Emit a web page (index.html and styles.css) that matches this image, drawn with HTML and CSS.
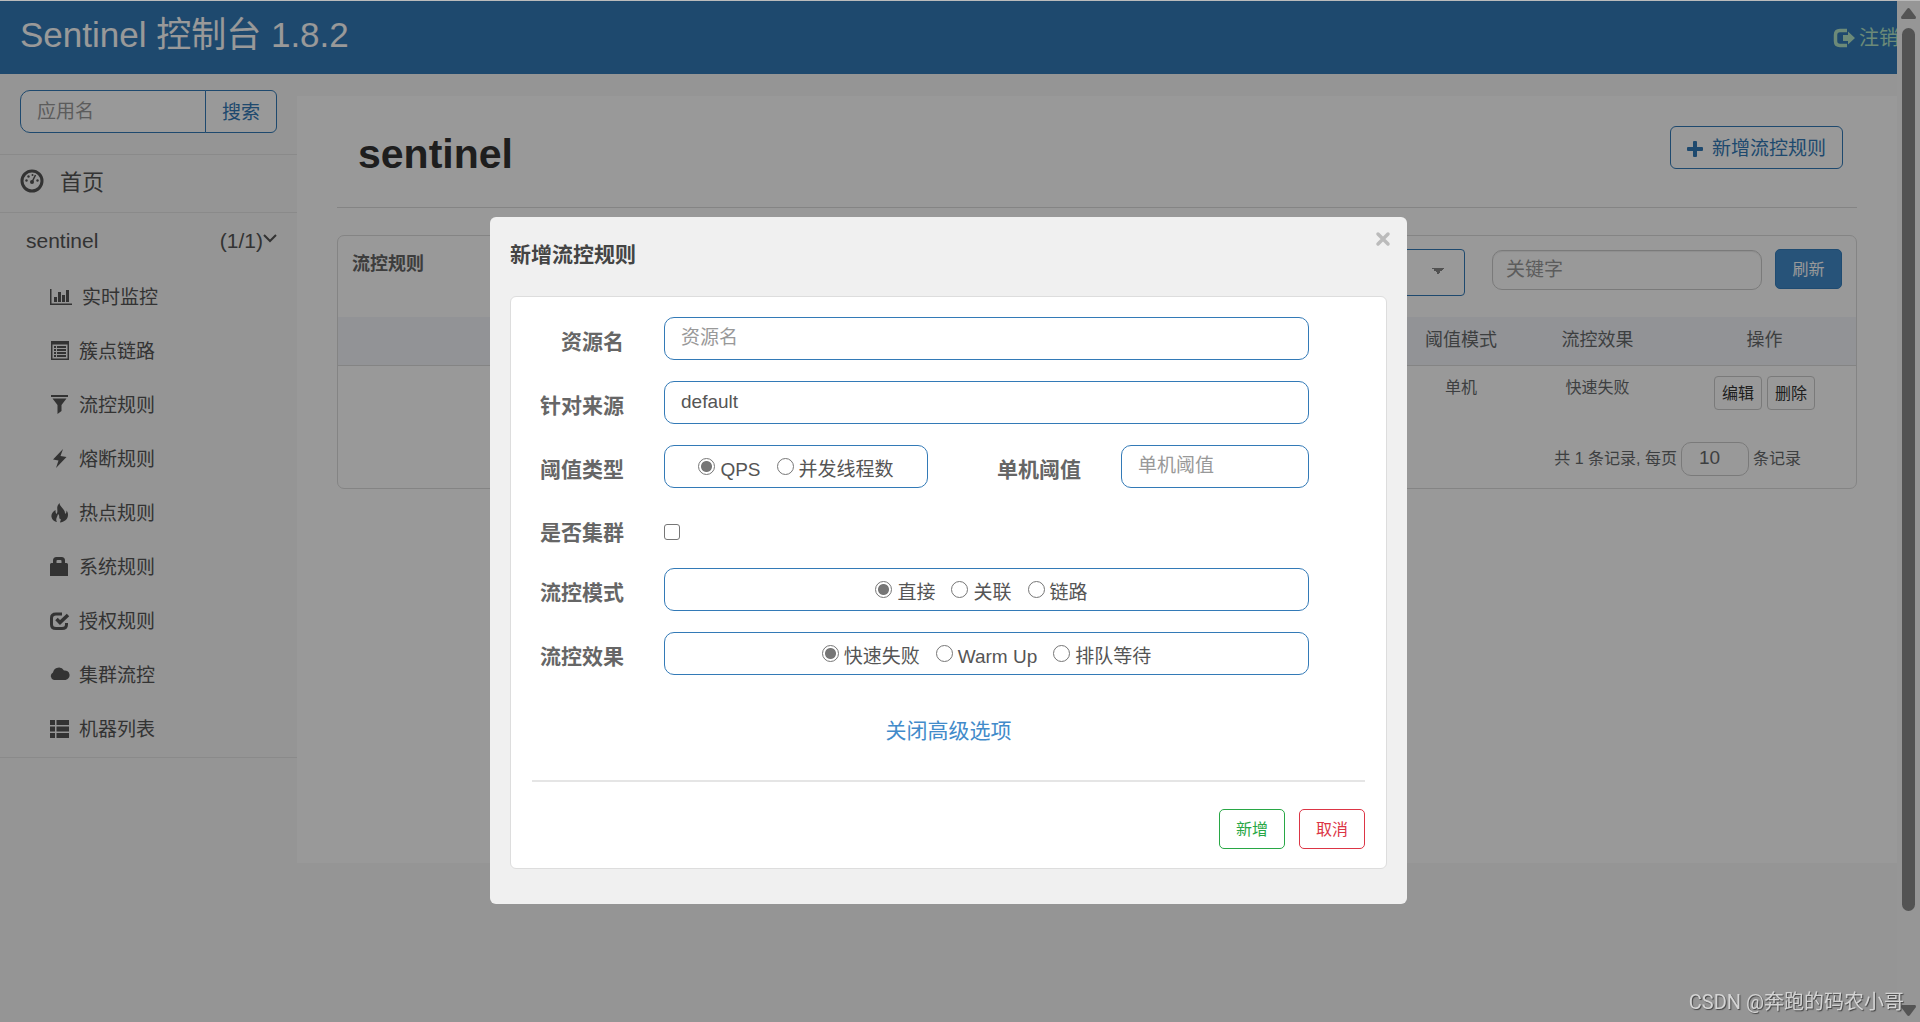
FILE: index.html
```html
<!DOCTYPE html>
<html lang="zh-CN">
<head>
<meta charset="utf-8">
<title>Sentinel 控制台</title>
<link rel="stylesheet" href="styles.css">
</head>
<body>
<div class="page">
  <header class="topbar">
    <span class="brand">Sentinel 控制台 1.8.2</span>
    <a class="logout" href="#"><svg width="22" height="20" viewBox="0 0 22 20"><path d="M14 2.500H7Q2.500 2.500 2.500 7V13Q2.500 17.500 7 17.500H14" fill="none" stroke="currentColor" stroke-width="3.500"/><path d="M10 7h5V3.500l7 6.500-7 6.500V13h-5z" fill="currentColor"/></svg><span>注销</span></a>
  </header>
  <div class="body">
    <nav class="sidebar">
      <form class="search">
        <input class="search-input" type="text" placeholder="应用名" aria-label="应用名">
        <button class="search-btn" type="button">搜索</button>
      </form>
      <a class="home" href="#"><svg width="24" height="24" viewBox="0 0 24 24"><circle cx="12" cy="12" r="10" fill="none" stroke="currentColor" stroke-width="3"/><g fill="currentColor"><circle cx="6.500" cy="11.500" r="1.200"/><circle cx="8.500" cy="7.500" r="1.200"/><circle cx="12.500" cy="6" r="1"/><circle cx="17.500" cy="11.500" r="1.200"/><circle cx="12" cy="13" r="2"/></g><path d="M12 13l3.500-7" stroke="currentColor" stroke-width="1.500"/></svg><span>首页</span></a>
      <a class="app" href="#"><span>sentinel</span><span class="count">(1/1)<svg width="14" height="21" viewBox="0 0 14 21"><path d="M1 6l6 6 6-6" fill="none" stroke="currentColor" stroke-width="2"/></svg></span></a>
      <ul class="menu">
        <li><a class="wide" href="#"><svg width="22" height="20" viewBox="0 0 22 20"><path d="M0 2h1.500v14.500H22V18H0z M4 10h3v5H4z M8 5h3v10H8z M12 8h3v7h-3z M16 3h3v12h-3z" fill="currentColor"/></svg><span>实时监控</span></a></li>
        <li><a href="#"><svg width="20" height="20" viewBox="0 0 20 20"><path fill-rule="evenodd" d="M1 0h18v19H1z M2.500 3.500v14h15v-14z" fill="currentColor"/><path d="M4 5h2v2H4z M7 5h9v2H7z M4 8h2v2H4z M7 8h9v2H7z M4 11h2v2H4z M7 11h9v2H7z M4 14h2v2H4z M7 14h9v2H7z" fill="currentColor"/></svg><span>簇点链路</span></a></li>
        <li><a href="#"><svg width="20" height="20" viewBox="0 0 20 20"><path d="M1 0h17v2H1z M2.500 3.500h14L11.500 10v6L7.500 19v-9z" fill="currentColor"/></svg><span>流控规则</span></a></li>
        <li><a href="#"><svg width="20" height="20" viewBox="0 0 20 20"><path d="M13 0L3 10.500l5.500 1L6 19 16.500 8l-6-1z" fill="currentColor"/></svg><span>熔断规则</span></a></li>
        <li><a href="#"><svg width="20" height="20" viewBox="0 0 20 20"><path d="M9.500 0C5 5 9 7 6.500 11 5.500 10 5.500 8.500 5.500 7 2.500 9 1 11 1.500 14c.5 3 3 4.500 5.500 5-2-3 .5-5 1-8 2.500 2 0 4 2.500 5 .8 1-.3 2-.5 3.500 4-.5 8-3 8-7.500 0-2-.5-3-1.500-4.500C16.500 9 16.500 10 15 11 15.500 6 9.500 4 9.500 0z" fill="currentColor"/></svg><span>热点规则</span></a></li>
        <li><a href="#"><svg width="20" height="20" viewBox="0 0 20 20"><path fill-rule="evenodd" d="M3 6V3.500Q3 0 6.500 0h5Q15 0 15 3.500V6h1.500Q18 6 18 7.500V19H0V7.500Q0 6 1.500 6z M6.500 6h5V4q0-1-1-1h-3q-1 0-1 1z" fill="currentColor"/></svg><span>系统规则</span></a></li>
        <li><a href="#"><svg width="20" height="20" viewBox="0 0 20 20"><path d="M12 3H6Q1.500 3 1.500 7v6.500q0 4 4.500 4h6q4.500 0 4.500-4V12" fill="none" stroke="currentColor" stroke-width="3"/><path d="M6.500 8l3.500 3.500L18 4" fill="none" stroke="currentColor" stroke-width="3.500"/></svg><span>授权规则</span></a></li>
        <li><a href="#"><svg width="20" height="20" viewBox="0 0 20 20"><path d="M4 15a4 4 0 0 1-1-7.500A6 6 0 0 1 14 5.500a4.700 4.700 0 0 1 1.500 9.500z" fill="currentColor"/></svg><span>集群流控</span></a></li>
        <li><a href="#"><svg width="20" height="20" viewBox="0 0 20 20"><path d="M0 1h5v5H0z M6.500 1H19v5H6.500z M0 7.500h5v5H0z M6.500 7.500H19v5H6.500z M0 14h5v5H0z M6.500 14H19v5H6.500z" fill="currentColor"/></svg><span>机器列表</span></a></li>
      </ul>
    </nav>
    <main class="content">
      <div class="heading">
        <h1>sentinel</h1>
        <button class="btn-add" type="button"><svg width="16" height="16" viewBox="0 0 16 16"><path d="M6 1q0-1 1-1h2q1 0 1 1v5h5q1 0 1 1v2q0 1-1 1h-5v5q0 1-1 1H7q-1 0-1-1v-5H1q-1 0-1-1V7q0-1 1-1h5z" fill="currentColor"/></svg><span>新增流控规则</span></button>
      </div>
      <section class="card">
        <div class="card-head">
          <h2>流控规则</h2>
          <div class="filters">
            <select class="machine" aria-label="机器"><option></option></select>
            <input class="keyword" type="text" placeholder="关键字" aria-label="关键字">
            <button class="btn-refresh" type="button">刷新</button>
          </div>
        </div>
        <table class="rules">
          <thead><tr><th></th><th class="c-mode">阈值模式</th><th class="c-effect">流控效果</th><th class="c-op">操作</th></tr></thead>
          <tbody><tr><td></td><td>单机</td><td>快速失败</td><td><div class="ops"><button class="btn-sm" type="button">编辑</button><button class="btn-sm" type="button">删除</button></div></td></tr></tbody>
        </table>
        <div class="pager"><label for="size">共 1 条记录, 每页</label><input id="size" type="text" value="10"><span>条记录</span></div>
      </section>
    </main>
  </div>
</div>
<div class="scrollbar">
  <svg width="15" height="11" viewBox="0 0 15 11"><path d="M6 1q1.500-2 3 0l6 8q0 2-1 2H1q-1 0-1-2z" fill="currentColor"/></svg>
  <div class="rail"><div class="thumb"></div></div>
  <svg width="15" height="11" viewBox="0 0 15 11"><path d="M6 10q1.500 2 3 0l6-8q0-2-1-2H1q-1 0-1 2z" fill="currentColor"/></svg>
</div>
<div class="overlay">
  <div class="modal" role="dialog" aria-labelledby="dlg-title">
    <h2 class="modal-title" id="dlg-title">新增流控规则</h2>
    <button class="close" type="button" aria-label="关闭"><svg width="16" height="16" viewBox="0 0 16 16"><path d="M3 3l10 10M13 3L3 13" stroke="currentColor" stroke-width="3.500" stroke-linecap="round"/></svg></button>
    <form class="panel">
      <div class="rows">
        <div class="row"><label class="lbl" for="res">资源名</label><input class="field" id="res" type="text" placeholder="资源名"></div>
        <div class="row"><label class="lbl" for="origin">针对来源</label><input class="field" id="origin" type="text" value="default"></div>
        <div class="row">
          <span class="lbl">阈值类型</span>
          <div class="field radios half">
            <label><input type="radio" name="grade" checked>QPS</label>
            <label><input type="radio" name="grade">并发线程数</label>
          </div>
          <label class="lbl lbl-mid" for="limit">单机阈值</label><input class="field small" id="limit" type="text" placeholder="单机阈值">
        </div>
        <div class="row row-check"><label class="lbl" for="cluster">是否集群</label><input class="check" id="cluster" type="checkbox"></div>
        <div class="row">
          <span class="lbl">流控模式</span>
          <div class="field radios radios-mode">
            <label><input type="radio" name="mode" checked>直接</label>
            <label><input type="radio" name="mode">关联</label>
            <label><input type="radio" name="mode">链路</label>
          </div>
        </div>
        <div class="row">
          <span class="lbl">流控效果</span>
          <div class="field radios">
            <label><input type="radio" name="effect" checked>快速失败</label>
            <label><input type="radio" name="effect">Warm Up</label>
            <label><input type="radio" name="effect">排队等待</label>
          </div>
        </div>
      </div>
      <a class="advanced" href="#">关闭高级选项</a>
      <div class="actions">
        <button class="btn-ok" type="button">新增</button>
        <button class="btn-cancel" type="button">取消</button>
      </div>
    </form>
  </div>
</div>
<div class="watermark">CSDN @奔跑的码农小哥</div>
</body>
</html>
```
FILE: styles.css
```css
* { box-sizing: border-box; }

body {
  margin: 0;
  background: #f8f8f8;
  color: #676a6c;
  font: 16px/24px "Liberation Sans", "Noto Sans CJK SC", sans-serif;
}

h1, h2, ul { margin: 0; padding: 0; font-size: inherit; }
ul { list-style: none; }
a { color: inherit; text-decoration: none; }
svg { display: block; flex: none; }
button, input, select { font: inherit; color: inherit; margin: 0; }
button { background: none; cursor: pointer; padding: 2px 0 0; }
input::placeholder { color: #999; opacity: 1; }

.page {
  min-height: 100vh;
  margin-right: 23px;
  border-top: 1px solid #fff;
  overflow: hidden;
}

/* header */
.topbar {
  display: flex;
  align-items: center;
  justify-content: space-between;
  height: 73px;
  padding: 0 0 0 20px;
  background: #337ab7;
  overflow: hidden;
}
.brand { color: #fff; font-size: 35px; line-height: 40px; padding-bottom: 6px; }
.logout {
  display: flex;
  align-items: center;
  gap: 4px;
  margin-right: -2px;
  font-size: 20px;
  color: #b4e6c8;
}

.body { display: flex; align-items: flex-start; }

/* sidebar */
.sidebar { width: 297px; flex: none; color: #555; }
.search { display: flex; height: 80px; padding: 16px 20px 21px; }
.search-input {
  flex: 1;
  min-width: 0;
  padding: 0 16px;
  background: #fff;
  border: 1px solid #337ab7;
  border-radius: 10px 0 0 10px;
  font-size: 19px;
}
.search-btn {
  width: 72px;
  margin-left: -1px;
  background: #fff;
  border: 1px solid #337ab7;
  border-radius: 0 6px 6px 0;
  color: #337ab7;
  font-size: 19px;
}
.home {
  display: flex;
  align-items: center;
  gap: 16px;
  height: 58px;
  padding: 0 20px 2px;
  border-top: 1px solid #e7e7e7;
  font-size: 22px;
}
.home svg { margin-bottom: 4px; }
.app {
  display: flex;
  align-items: center;
  justify-content: space-between;
  height: 59px;
  padding: 0 20px 2px 26px;
  border-top: 1px solid #e7e7e7;
  font-size: 21px;
}
.count { display: flex; align-items: center; }
.count svg { margin-bottom: 4px; }
.menu { border-bottom: 1px solid #e7e7e7; }
.menu a {
  display: flex;
  align-items: center;
  gap: 9px;
  height: 54px;
  padding-left: 50px;
  font-size: 19px;
}
.menu svg { margin-bottom: 2px; }
.menu .wide { gap: 10px; }

/* content */
.content {
  flex: 1;
  min-width: 0;
  min-height: 767px;
  margin-top: 22px;
  padding: 0 40px;
  background: #fff;
}
.heading {
  display: flex;
  align-items: flex-start;
  justify-content: space-between;
  height: 112px;
  padding: 30px 14px 0 21px;
  border-bottom: 1px solid #dcdcdc;
}
h1 { color: #333; font-size: 41px; line-height: 57px; }
.btn-add {
  display: flex;
  align-items: center;
  justify-content: center;
  gap: 9px;
  width: 173px;
  height: 43px;
  border: 1px solid #337ab7;
  border-radius: 6px;
  color: #337ab7;
  font-size: 19px;
}
.card {
  margin-top: 27px;
  border: 1px solid #dcdcdc;
  border-radius: 7px;
}
.card-head {
  display: flex;
  justify-content: space-between;
  height: 81px;
  padding: 13px 14px;
}
.card-head h2 { font-size: 18px; line-height: 30px; color: #666; }
.filters { display: flex; align-items: flex-start; }
.machine {
  appearance: none;
  width: 300px;
  height: 47px;
  margin-right: 27px;
  border: 1px solid #337ab7;
  border-radius: 4px;
  background-color: #fff;
  background-image: linear-gradient(to bottom left, #888 50%, transparent 50%), linear-gradient(to bottom right, #888 50%, transparent 50%);
  background-repeat: no-repeat;
  background-size: 6px 6px;
  background-position: right 26px top 18px, right 20px top 18px;
}
.keyword {
  width: 270px;
  height: 40px;
  margin: 1px 13px 0 0;
  padding: 0 13px;
  border: 1px solid #ccc;
  border-radius: 10px;
  box-shadow: inset 0 1px 1px rgba(0, 0, 0, .075);
  font-size: 19px;
}
.btn-refresh {
  width: 67px;
  height: 40px;
  border: 1px solid #357ebd;
  border-radius: 5px;
  background: #428bca;
  color: #fff;
}
.rules { width: 100%; border-collapse: collapse; table-layout: fixed; text-align: center; }
.rules th {
  height: 48px;
  padding: 0 0 2px;
  background: #f3f6fa;
  border-bottom: 1px solid #dcdcdc;
  font-size: 18px;
  font-weight: normal;
}
.rules td { padding: 10px 0 0; vertical-align: top; }
.c-mode { width: 122px; }
.c-effect { width: 151px; }
.c-op { width: 183px; }
.ops { display: flex; justify-content: center; gap: 5px; }
.btn-sm {
  width: 48px;
  height: 34px;
  border: 1px solid #ccc;
  border-radius: 4px;
  color: #333;
}
.pager {
  display: flex;
  align-items: center;
  justify-content: flex-end;
  gap: 4px;
  padding: 32px 55px 12px 0;
}
.pager input {
  width: 68px;
  height: 34px;
  padding: 0 17px 2px;
  border: 1px solid #ccc;
  border-radius: 10px;
  font-size: 19px;
}

/* scrollbar */
.scrollbar {
  position: fixed;
  inset: 0 0 0 auto;
  display: flex;
  flex-direction: column;
  align-items: center;
  gap: 9px;
  width: 23px;
  padding: 8px 0 6px;
  background: #fafafa;
  color: #8c8c8c;
}
.rail { flex: 1; }
.thumb { width: 13px; height: calc(100% - 85px); border-radius: 7px; background: #8a8a8a; }

/* dialog */
.overlay {
  position: fixed;
  inset: 0;
  padding: 216px 23px 0 0;
  border-top: 1px solid #bbb;
  background: rgba(0, 0, 0, .4);
}
.modal {
  position: relative;
  width: 917px;
  margin: 0 auto;
  padding: 22px 20px 35px;
  background: #f0f0f0;
  border-radius: 6px;
}
.modal-title { margin-bottom: 25px; color: #444; font-size: 21px; line-height: 32px; }
.close {
  position: absolute;
  top: 12px;
  right: 16px;
  border: 0;
  color: #bbb;
}
.panel {
  padding: 20px 21px 19px;
  background: #fff;
  border: 1px solid #ddd;
  border-radius: 6px;
}
.rows { display: flex; flex-direction: column; gap: 21px; padding-right: 56px; }
.row { display: flex; align-items: center; height: 43px; }
.row-check { height: 38px; padding-top: 8px; }
.lbl {
  width: 92px;
  margin-right: 40px;
  padding-top: 6px;
  text-align: right;
  color: #666;
  font-size: 21px;
  font-weight: bold;
  white-space: nowrap;
}
.row-check .lbl { padding-top: 2px; }
.lbl-mid { width: auto; margin-left: auto; }
.field {
  flex: 1;
  min-width: 0;
  height: 43px;
  padding: 0 16px 1px;
  border: 1px solid #337ab7;
  border-radius: 10px;
  background: #fff;
  color: #555;
  font-size: 19px;
}
.half { flex: none; width: 264px; }
.small { flex: none; width: 188px; }
.radios { display: flex; align-items: center; justify-content: center; gap: 16px; padding: 7px 0 0; }
.radios-mode { padding-right: 10px; }
.radios label { display: flex; align-items: center; gap: 5px; white-space: nowrap; }
.radios input { width: 17px; height: 17px; margin-bottom: 7px; }
.radios input, .check { flex: none; appearance: none; border: 1px solid #767676; background: #fff; }
.radios input { border-radius: 50%; }
.radios input:checked { background: radial-gradient(circle, #767676 5px, #fff 6px); }
.check { width: 16px; height: 16px; border-radius: 3px; }
.advanced {
  display: block;
  padding: 40px 0 33px;
  border-bottom: 2px solid #e5e5e5;
  color: #428bca;
  font-size: 21px;
  line-height: 32px;
  text-align: center;
}
.actions { display: flex; justify-content: flex-end; gap: 14px; padding-top: 27px; }
.actions button { width: 66px; height: 40px; border: 1px solid; border-radius: 5px; }
.btn-ok { color: #28a745; }
.btn-cancel { color: #dc3545; }

.watermark {
  position: fixed;
  right: 16px;
  bottom: 5px;
  color: #d4d4d4;
  font: 20px/30px Roboto, "Noto Sans CJK SC", sans-serif;
  text-shadow: 1px 1px 1px #444;
}
```
